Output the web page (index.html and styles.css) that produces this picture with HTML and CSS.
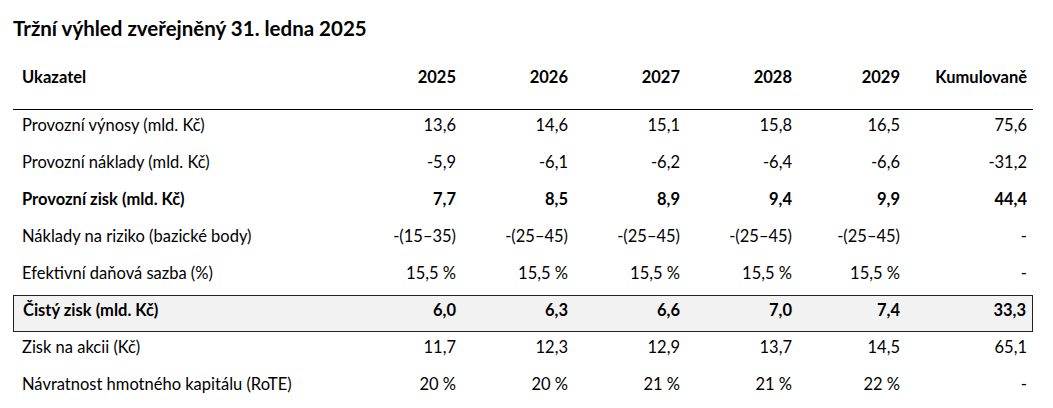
FILE: index.html
```html
<!DOCTYPE html>
<html lang="cs">
<head>
<meta charset="utf-8">
<title>Tržní výhled</title>
<link rel="stylesheet" href="styles.css">
</head>
<body>
<div class="page">
  <h1 class="title">Tržní výhled zveřejněný 31. ledna 2025</h1>
  <table class="outlook">
    <colgroup>
      <col class="c-label"><col class="c-year"><col class="c-year"><col class="c-year"><col class="c-year"><col class="c-year5"><col class="c-cum">
    </colgroup>
    <thead>
      <tr>
        <th class="label">Ukazatel</th>
        <th>2025</th><th>2026</th><th>2027</th><th>2028</th><th>2029</th><th>Kumulovaně</th>
      </tr>
    </thead>
    <tbody>
      <tr><td class="label">Provozní výnosy (mld. Kč)</td><td>13,6</td><td>14,6</td><td>15,1</td><td>15,8</td><td>16,5</td><td>75,6</td></tr>
      <tr><td class="label">Provozní náklady (mld. Kč)</td><td>-5,9</td><td>-6,1</td><td>-6,2</td><td>-6,4</td><td>-6,6</td><td>-31,2</td></tr>
      <tr class="bold"><td class="label">Provozní zisk (mld. Kč)</td><td>7,7</td><td>8,5</td><td>8,9</td><td>9,4</td><td>9,9</td><td>44,4</td></tr>
      <tr><td class="label">Náklady na riziko (bazické body)</td><td>-(15–35)</td><td>-(25–45)</td><td>-(25–45)</td><td>-(25–45)</td><td>-(25–45)</td><td>-</td></tr>
      <tr><td class="label">Efektivní daňová sazba (%)</td><td>15,5 %</td><td>15,5 %</td><td>15,5 %</td><td>15,5 %</td><td>15,5 %</td><td>-</td></tr>
      <tr class="bold boxed"><td class="label">Čistý zisk (mld. Kč)</td><td>6,0</td><td>6,3</td><td>6,6</td><td>7,0</td><td>7,4</td><td>33,3</td></tr>
      <tr><td class="label">Zisk na akcii (Kč)</td><td>11,7</td><td>12,3</td><td>12,9</td><td>13,7</td><td>14,5</td><td>65,1</td></tr>
      <tr><td class="label">Návratnost hmotného kapitálu (RoTE)</td><td>20 %</td><td>20 %</td><td>21 %</td><td>21 %</td><td>22 %</td><td>-</td></tr>
    </tbody>
  </table>
</div>
</body>
</html>
```
FILE: styles.css
```css
html, body {
  margin: 0;
  padding: 0;
  background: #ffffff;
}
body {
  font-family: Lato, "Open Sans", "Liberation Sans", sans-serif;
  color: #000000;
}
.page {
  padding: 0 0 0 13px;
}
.title {
  margin: 0;
  padding-top: 16px;
  font-size: 20.5px;
  line-height: 24px;
  font-weight: 700;
}
.outlook {
  margin-top: 10px;
  width: 1020px;
  border-collapse: separate;
  border-spacing: 0;
  table-layout: fixed;
  font-size: 16.5px;
}
.c-label { width: 337px; }
.c-year { width: 112px; }
.c-year5 { width: 108px; }
.c-cum { width: 127px; }
th, td {
  text-align: right;
  padding: 5px 6px 12px 6px;
  line-height: 20px;
  white-space: nowrap;
  vertical-align: top;
}
th {
  font-weight: 700;
  padding-top: 17px;
  padding-bottom: 22px;
  border-bottom: 1px solid #000;
}
.label {
  text-align: left;
  padding-left: 9px;
}
.bold td { font-weight: 700; }
.boxed td {
  background: #f2f2f2;
  border-top: 1px solid #222;
  border-bottom: 1px solid #222;
  padding-top: 4px;
  padding-bottom: 11px;
}
.boxed td:first-child { border-left: 1px solid #222; }
.boxed td:last-child { border-right: 1px solid #222; }
```
